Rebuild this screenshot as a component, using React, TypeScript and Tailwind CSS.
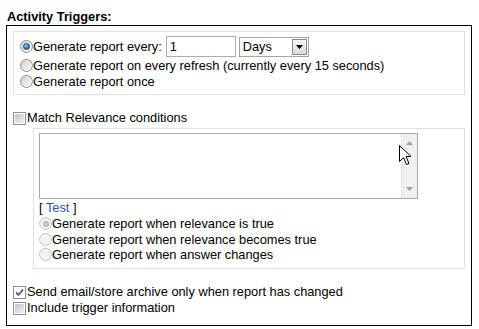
import React from "react";

const Radio: React.FC<{ checked?: boolean; disabled?: boolean }> = ({ checked, disabled }) => (
  <span
    className={
      disabled
        ? "flex h-[13px] w-[13px] shrink-0 items-center justify-center rounded-full border border-[#c6c6c6] bg-[#f3f3f3]"
        : "flex h-[13px] w-[13px] shrink-0 items-center justify-center rounded-full border border-[#8e8f8f] bg-[linear-gradient(135deg,#cfcfcf,#fbfbfb)]"
    }
  >
    {checked && !disabled && (
      <span className="h-[7px] w-[7px] rounded-full border border-[#1d4f8c] bg-[radial-gradient(circle_at_40%_35%,#a6dcff,#2a6fbf_60%,#1b4f93)]" />
    )}
    {checked && disabled && <span className="h-[6px] w-[6px] rounded-full border border-[#a8a8a8] bg-[#cfcfcf]" />}
  </span>
);

const Checkbox: React.FC<{ checked?: boolean }> = ({ checked }) => (
  <span className="flex h-[13px] w-[13px] shrink-0 items-center justify-center border border-[#8e8f8f] bg-white p-[1px]">
    {checked ? (
      <svg width="9" height="9" viewBox="0 0 9 9">
        <path d="M1 4.5 L3.5 7 L8 1.5" fill="none" stroke="#3b5a9e" strokeWidth="1.8" />
      </svg>
    ) : (
      <span className="h-full w-full bg-[linear-gradient(135deg,#c4c4c4,#f0f0f0)]" />
    )}
  </span>
);

const Row: React.FC<{ className?: string; children: React.ReactNode }> = ({ className, children }) => (
  <div className={"flex items-center whitespace-nowrap " + (className ?? "h-[15.5px]")}>{children}</div>
);

export default function App() {
  return (
    <div className="h-[329px] w-[479px] bg-white px-[6px] pt-[9px] font-['Liberation_Sans',Arial,sans-serif] text-[12.8px] text-black">
      <div className="pl-[1px] font-bold leading-[16px]">Activity Triggers:</div>

      <div className="h-[301px] w-[466px] border border-black px-[6px] pt-[5px]">
        {/* schedule options */}
        <div className="border border-[#e0e0e0] pb-[5px] pl-[6px] pt-[3px]">
          <Row className="h-[23px]">
            <Radio checked />
            <span>Generate report every:</span>
            <div className="ml-[4px] flex h-[21px] w-[70px] items-center border border-[#abadb3] pl-[3px]">1</div>
            <div className="ml-[3px] flex h-[20px] w-[70px] items-center border border-[#a5a5a5] pl-[3px]">
              <span className="flex-1">Days</span>
              <span className="mr-[1px] flex h-[16px] w-[15px] items-center justify-center border border-[#8a8a8a] bg-[linear-gradient(#f7f7f7,#d9d9d9)]">
                <svg width="7" height="4" viewBox="0 0 7 4">
                  <path d="M0 0 H7 L3.5 4 Z" fill="#000" />
                </svg>
              </span>
            </div>
          </Row>
          <Row>
            <Radio />
            <span>Generate report on every refresh (currently every 15 seconds)</span>
          </Row>
          <Row>
            <Radio />
            <span>Generate report once</span>
          </Row>
        </div>

        <Row className="mt-[15px] h-[16px]">
          <Checkbox />
          <span className="ml-[1px]">Match Relevance conditions</span>
        </Row>

        {/* relevance block */}
        <div className="ml-[20px] mt-[2px] border border-[#e0e0e0] pb-[5.5px] pl-[5px] pt-[4px]">
          <div className="relative flex h-[66px] w-[379px] border border-[#a9a9a9]">
            <div className="flex-1" />
            <div className="flex w-[16px] flex-col items-center justify-between border-l border-[#e6e6e6] bg-[#f0f0f0] py-[7px]">
              <svg width="7" height="4" viewBox="0 0 7 4">
                <path d="M0 4 H7 L3.5 0 Z" fill="#a0a0a0" />
              </svg>
              <svg width="7" height="4" viewBox="0 0 7 4">
                <path d="M0 0 H7 L3.5 4 Z" fill="#a0a0a0" />
              </svg>
            </div>
            <svg className="absolute left-[359px] top-[11px]" width="13" height="21" viewBox="0 0 13 21">
              <path
                d="M0.5 0.5 L0.5 16.5 L4.5 12.5 L7.5 19.5 L10 18.5 L7 11.5 L12 11.5 Z"
                fill="#fff"
                stroke="#000"
                strokeWidth="1"
                strokeLinejoin="miter"
              />
            </svg>
          </div>
          <Row className="h-[17px]">
            <span>
              [ <span className="text-[#2457a6]">Test</span> ]
            </span>
          </Row>
          <Row>
            <Radio checked disabled />
            <span>Generate report when relevance is true</span>
          </Row>
          <Row>
            <Radio disabled />
            <span>Generate report when relevance becomes true</span>
          </Row>
          <Row>
            <Radio disabled />
            <span>Generate report when answer changes</span>
          </Row>
        </div>

        <Row className="mt-[15px] h-[16px]">
          <Checkbox checked />
          <span className="ml-[1px]">Send email/store archive only when report has changed</span>
        </Row>
        <Row className="h-[16px]">
          <Checkbox />
          <span className="ml-[1px]">Include trigger information</span>
        </Row>
      </div>
    </div>
  );
}
